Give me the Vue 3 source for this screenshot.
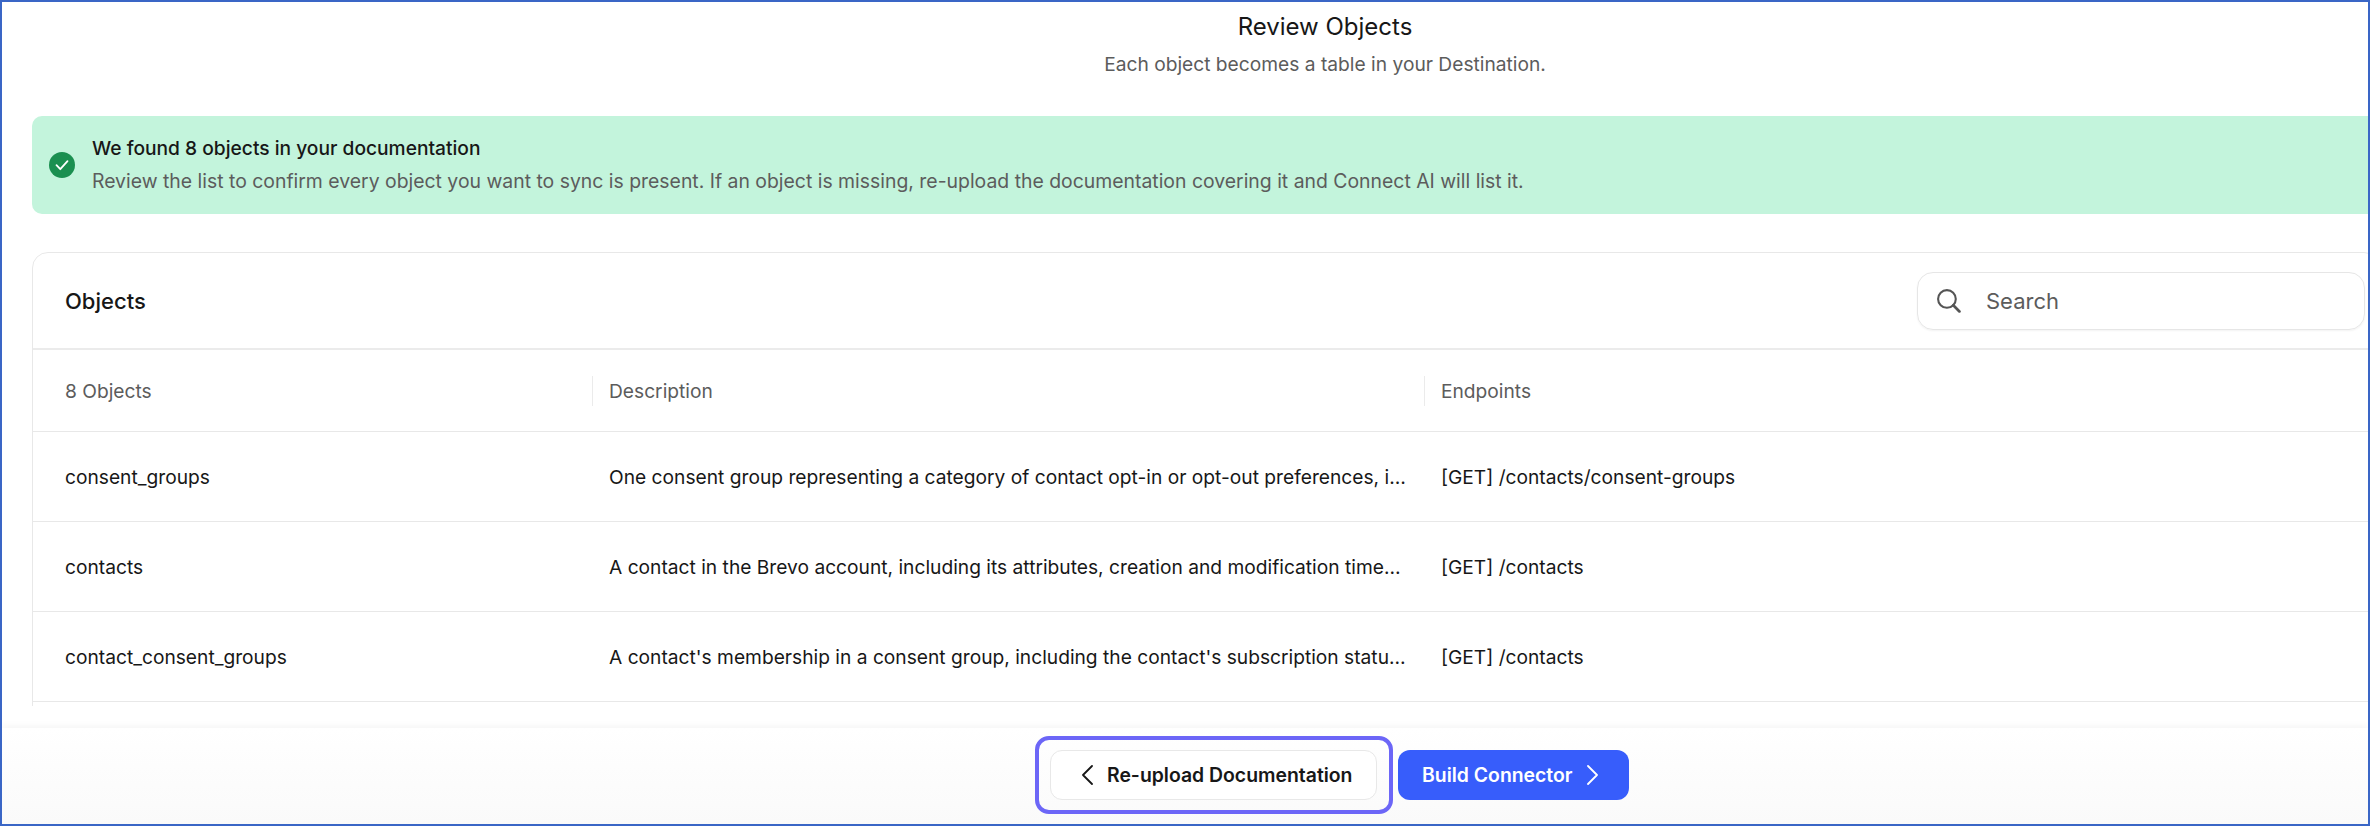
<script setup>
const rows = [
  { name: 'consent_groups', desc: 'One consent group representing a category of contact opt-in or opt-out preferences, including its name and identifier', ep: '[GET] /contacts/consent-groups' },
  { name: 'contacts', desc: 'A contact in the Brevo account, including its attributes, creation and modification timestamps and list memberships', ep: '[GET] /contacts' },
  { name: 'contact_consent_groups', desc: "A contact's membership in a consent group, including the contact's subscription status and timestamps", ep: '[GET] /contacts' },
]
</script>

<template>
  <div class="frame">
    <main class="main">
      <header class="head">
        <h1 class="title">Review Objects</h1>
        <p class="subtitle">Each object becomes a table in your Destination.</p>
      </header>

      <section class="banner">
        <svg class="banner-icon" viewBox="0 0 26 26" width="26" height="26" aria-hidden="true">
          <circle cx="13" cy="13" r="13" fill="#1a8f50" />
          <path d="M7.5 13.2l3.8 4 7.2-8" fill="none" stroke="#fff" stroke-width="1.8" stroke-linecap="round" stroke-linejoin="round" />
        </svg>
        <div class="banner-text">
          <div class="banner-title">We found 8 objects in your documentation</div>
          <div class="banner-sub">Review the list to confirm every object you want to sync is present. If an object is missing, re-upload the documentation covering it and Connect AI will list it.</div>
        </div>
      </section>

      <div class="card-clip">
        <section class="card">
          <div class="card-head">
            <h2 class="card-title">Objects</h2>
            <div class="search">
              <svg viewBox="0 0 24 24" width="25" height="25" fill="none" stroke="#555" stroke-width="2" stroke-linecap="round" aria-hidden="true">
                <circle cx="10.5" cy="10.5" r="8.5" />
                <path d="M16.6 16.6L22.5 22.5" stroke-width="2.6" />
              </svg>
              <span class="search-text">Search</span>
            </div>
          </div>
          <div class="row row-head">
            <div class="cell">8 Objects</div>
            <div class="cell cell-div">Description</div>
            <div class="cell cell-div">Endpoints</div>
          </div>
          <div v-for="r in rows" :key="r.name" class="row">
            <div class="cell">{{ r.name }}</div>
            <div class="cell cell-desc"><span class="ellipsis">{{ r.desc }}</span></div>
            <div class="cell">{{ r.ep }}</div>
          </div>
        </section>
      </div>
    </main>

    <footer class="footer">
      <button class="btn btn-ghost" type="button">
        <svg viewBox="0 0 12 20" width="12" height="20" fill="none" stroke="currentColor" stroke-width="1.8" stroke-linecap="round" stroke-linejoin="round" aria-hidden="true">
          <path d="M11 1L2 10l9 9" />
        </svg>
        Re-upload Documentation
      </button>
      <button class="btn btn-primary" type="button">
        Build Connector
        <svg viewBox="0 0 12 20" width="12" height="20" fill="none" stroke="currentColor" stroke-width="1.8" stroke-linecap="round" stroke-linejoin="round" aria-hidden="true">
          <path d="M1 1l9 9-9 9" />
        </svg>
      </button>
    </footer>
  </div>
</template>

<style scoped>
.frame {
  box-sizing: border-box;
  width: 2370px;
  height: 826px;
  border: 2px solid #3a66c6;
  display: flex;
  flex-direction: column;
  overflow: hidden;
  background: #fff;
  font-family: Inter, "Liberation Sans", sans-serif;
  color: #171717;
}
.main {
  flex: 1;
  min-height: 0;
  display: flex;
  flex-direction: column;
  padding: 0 0 22px 30px;
}
.head {
  padding: 9px 0 39px 250px;
  text-align: center;
}
.title {
  margin: 0;
  font-size: 24px;
  line-height: 32px;
  font-weight: 400;
}
.subtitle {
  margin: 8px 0 0;
  font-size: 19.2px;
  line-height: 26px;
  color: #5c5c5c;
}
.banner {
  display: flex;
  align-items: center;
  gap: 17px;
  height: 98px;
  box-sizing: border-box;
  padding: 0 0 0 17px;
  margin-right: -12px;
  border-radius: 10px;
  background: #c3f4dc;
}
.banner-icon { flex: none; }
.banner-title {
  font-size: 19.2px;
  line-height: 26px;
  font-weight: 500;
  margin-top: -2px;
}
.banner-sub {
  margin-top: 7px;
  font-size: 19.4px;
  line-height: 26px;
  color: #5c5c5c;
}
.card-clip {
  flex: 1;
  min-height: 0;
  margin-top: 38px;
  overflow: hidden;
}
.card {
  box-sizing: border-box;
  min-height: 520px;
  margin-right: -12px;
  border: 1px solid #e8e8e8;
  border-radius: 16px;
}
.card-head {
  display: flex;
  align-items: center;
  justify-content: space-between;
  height: 97px;
  box-sizing: border-box;
  padding: 0 14px 0 32px;
  border-bottom: 2px solid #ebebeb;
}
.card-title {
  margin: 0;
  font-size: 22px;
  font-weight: 500;
}
.search {
  box-sizing: border-box;
  width: 448px;
  height: 58px;
  display: flex;
  align-items: center;
  gap: 25px;
  padding-left: 18px;
  border: 1px solid #e6e6e6;
  border-radius: 16px;
  box-shadow: 0 1px 2px rgba(10, 13, 20, 0.05);
}
.search-text {
  font-size: 22px;
  color: #5c5c5c;
}
.row {
  display: grid;
  grid-template-columns: 559px 832px 1fr;
  align-items: center;
  height: 90px;
  box-sizing: border-box;
  border-bottom: 1px solid #e8e8e8;
  font-size: 19.2px;
}
.row-head {
  height: 82px;
  color: #5c5c5c;
}
.cell {
  box-sizing: border-box;
  padding: 0 17px;
  min-width: 0;
  white-space: nowrap;
}
.row > .cell:first-child { padding-left: 32px; }
.cell-div {
  position: relative;
}
.cell-div::before {
  content: "";
  position: absolute;
  left: 0;
  top: -3px;
  bottom: -3px;
  width: 1px;
  background: #ebebeb;
}
.ellipsis {
  display: block;
  overflow: hidden;
  text-overflow: ellipsis;
}
.footer {
  flex: none;
  height: 96px;
  display: flex;
  align-items: center;
  gap: 21px;
  padding: 0 0 2px 1048px;
  box-sizing: border-box;
  box-shadow: 0 -3px 6px rgba(0, 0, 0, 0.035);
  background: linear-gradient(#fff, #fafafa);
  z-index: 1;
}
.btn {
  box-sizing: border-box;
  height: 50px;
  display: inline-flex;
  align-items: center;
  gap: 14px;
  border-radius: 12px;
  font-family: inherit;
  font-size: 19.4px;
  font-weight: 600;
}
.btn-ghost {
  position: relative;
  width: 327px;
  padding: 0 0 0 30px;
  background: #fff;
  border: 1px solid #e8e8e8;
  color: #171717;
}
.btn-ghost::after {
  content: "";
  position: absolute;
  inset: -15px -17px -15px -16px;
  border: 4px solid #6c66f7;
  border-radius: 14px;
}
.btn-primary {
  width: 231px;
  padding: 0 0 0 24px;
  background: #375dfb;
  border: 0;
  color: #fff;
}
</style>
